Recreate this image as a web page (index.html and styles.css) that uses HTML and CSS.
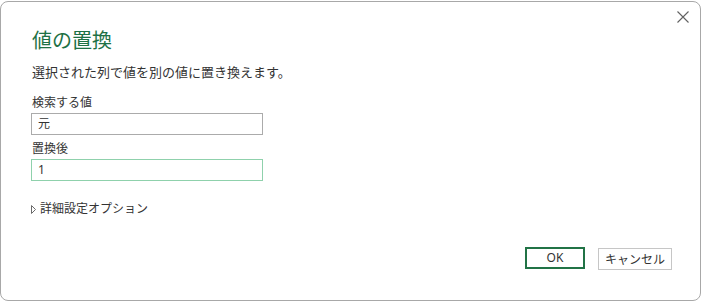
FILE: index.html
```html
<!DOCTYPE html>
<html lang="ja">
<head>
<meta charset="utf-8">
<title>値の置換</title>
<link rel="stylesheet" href="styles.css">
</head>
<body>
<div class="dialog">
  <button class="close" aria-label="閉じる">
    <svg width="12" height="12" viewBox="0 0 12 12"><path d="M0.5 0.5 L11.5 11.5 M11.5 0.5 L0.5 11.5" stroke="#616161" stroke-width="1.1" fill="none"/></svg>
  </button>
  <h1 class="title">値の置換</h1>
  <p class="subtitle">選択された列で値を別の値に置き換えます。</p>
  <label class="label label-first">検索する値</label>
  <div class="input">元</div>
  <label class="label">置換後</label>
  <div class="input input-focus">1</div>
  <div class="advanced">
    <svg class="tri" width="5" height="9" viewBox="0 0 5 9"><path d="M0.5 0.5 L4.5 4.5 L0.5 8.5 Z" stroke="#6b6b6b" stroke-width="1" fill="none"/></svg>
    <span>詳細設定オプション</span>
  </div>
  <div class="footer">
    <button class="btn btn-ok">OK</button>
    <button class="btn btn-cancel">キャンセル</button>
  </div>
</div>
</body>
</html>
```

FILE: styles.css
```css
html, body {
  margin: 0;
  padding: 0;
  background: #ffffff;
}
body {
  font-family: "Noto Sans CJK JP", "Noto Sans", sans-serif;
  color: #333333;
  width: 702px;
  height: 303px;
  overflow: hidden;
}
.dialog {
  position: relative;
  box-sizing: border-box;
  margin-top: 1px;
  width: 701px;
  height: 300px;
  background: #ffffff;
  border: 1px solid #a8a8a8;
  border-radius: 8px;
  padding: 0 0 0 30px;
  display: flex;
  flex-direction: column;
}
.close {
  position: absolute;
  top: 8px;
  right: 10px;
  width: 14px;
  height: 14px;
  padding: 0;
  border: 0;
  background: none;
  display: flex;
  align-items: center;
  justify-content: center;
}
.title {
  margin: 24px 0 0 1px;
  font-size: 20px;
  line-height: 28px;
  font-weight: 400;
  color: #1e7145;
}
.subtitle {
  margin: 9px 0 0 1px;
  font-size: 13px;
  line-height: 18px;
}
.label {
  display: block;
  font-size: 12px;
  line-height: 16px;
  margin-left: 1px;
}
.label-first {
  margin-top: 13px;
}
.input {
  box-sizing: border-box;
  width: 232px;
  height: 22px;
  border: 1px solid #ababab;
  margin-top: 3px;
  margin-bottom: 7px;
  padding: 0 6px;
  font-size: 12px;
  line-height: 20px;
  font-family: "Noto Sans", "Noto Sans CJK JP", sans-serif;
}
.input + .label {
  margin-top: -2px;
}
.input-focus {
  border-color: #8fd1ac;
}
.advanced {
  margin-top: 12px;
  display: flex;
  align-items: center;
  gap: 4px;
  font-size: 12px;
  line-height: 16px;
}
.tri {
  margin-top: 2px;
}
.footer {
  margin-top: 31px;
  display: flex;
  gap: 13px;
  padding-left: 494px;
}
.btn {
  box-sizing: border-box;
  height: 22px;
  padding: 0;
  background: #ffffff;
  font-family: "Noto Sans CJK JP", "Noto Sans", sans-serif;
  font-size: 12px;
  color: #333333;
  line-height: 18px;
}
.btn-ok {
  width: 60px;
  border: 2px solid #217346;
  font-family: "Noto Sans", sans-serif;
}
.btn-cancel {
  width: 74px;
  border: 1px solid #c6c6c6;
  margin-top: 1px;
}
```
